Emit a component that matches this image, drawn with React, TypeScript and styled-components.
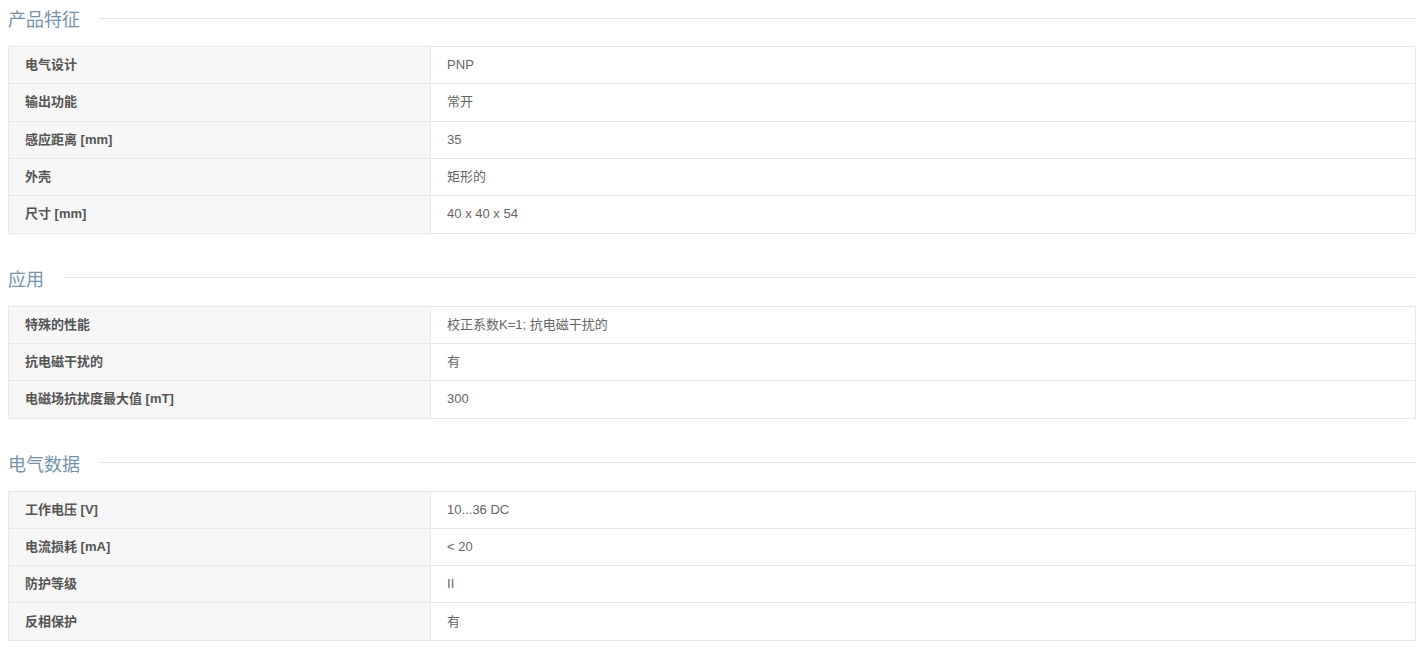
import styled, { createGlobalStyle } from 'styled-components';

const GlobalStyle = createGlobalStyle`
html, body {
    margin: 0;
    padding: 0;
    background: #fff;
}
body {
    font-family: Arial, "Liberation Sans", "Noto Sans CJK SC", sans-serif;
}
`;

type Row = [string, string];

const sections: { title: string; rows: Row[] }[] = [
    {
        title: '产品特征',
        rows: [
            ['电气设计', 'PNP'],
            ['输出功能', '常开'],
            ['感应距离 [mm]', '35'],
            ['外壳', '矩形的'],
            ['尺寸 [mm]', '40 x 40 x 54'],
        ],
    },
    {
        title: '应用',
        rows: [
            ['特殊的性能', '校正系数K=1; 抗电磁干扰的'],
            ['抗电磁干扰的', '有'],
            ['电磁场抗扰度最大值 [mT]', '300'],
        ],
    },
    {
        title: '电气数据',
        rows: [
            ['工作电压 [V]', '10...36 DC'],
            ['电流损耗 [mA]', '< 20'],
            ['防护等级', 'II'],
            ['反相保护', '有'],
        ],
    },
];

export default function App() {
    return (
        <>
            <GlobalStyle />
            <Page>
                {sections.map(section => (
                    <Section key={section.title}>
                        <SectionTitle>
                            <TitleText>{section.title}</TitleText>
                            <TitleLine />
                        </SectionTitle>
                        <SpecTable>
                            <tbody>
                                {section.rows.map(([label, value]) => (
                                    <tr key={label}>
                                        <LabelCell>{label}</LabelCell>
                                        <ValueCell>{value}</ValueCell>
                                    </tr>
                                ))}
                            </tbody>
                        </SpecTable>
                    </Section>
                ))}
            </Page>
        </>
    );
}

const Page = styled.div`
padding: 0 10px 0 8px;
display: flex;
flex-direction: column;
gap: 26px;
`;

const Section = styled.section`
display: flex;
flex-direction: column;
gap: 10px;
`;

const SectionTitle = styled.div`
display: flex;
align-items: center;
gap: 20px;
height: 36px;
`;

const TitleText = styled.h3`
margin: 0;
font-size: 18px;
font-weight: normal;
color: #7593aa;
font-family: "Liberation Sans", "Noto Sans CJK SC", sans-serif;
`;

const TitleLine = styled.div`
flex: 1;
height: 1px;
background: #e5e5e5;
`;

const SpecTable = styled.table`
width: 100%;
border-collapse: collapse;
font-size: 13px;
font-family: "Liberation Sans", "Noto Sans CJK SC", sans-serif;

td {
    border: 1px solid #e8e8e8;
    padding: 8.17px 16px;
    line-height: 20px;
    text-align: left;
    vertical-align: middle;
}
`;

const LabelCell = styled.td`
width: 30%;
background: #f7f7f7;
font-weight: bold;
color: #555;
`;

const ValueCell = styled.td`
color: #666;
`;
